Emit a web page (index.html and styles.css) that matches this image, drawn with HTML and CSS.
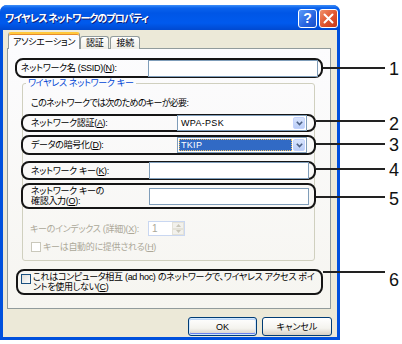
FILE: index.html
```html
<!DOCTYPE html>
<html lang="ja">
<head>
<meta charset="utf-8">
<title>ワイヤレス ネットワークのプロパティ</title>
<link rel="stylesheet" href="styles.css">
</head>
<body>
<div class="page">
  <div class="window">
    <div class="titlebar">
      <span class="title">ワイヤレス ネットワークのプロパティ</span>
      <div class="tbtns">
        <span class="tbtn help">?</span>
        <span class="tbtn close"><svg width="11" height="11" viewBox="0 0 11 11"><path d="M1.5 1.5L9.5 9.5M9.5 1.5L1.5 9.5" stroke="#fff" stroke-width="2" stroke-linecap="round"/></svg></span>
      </div>
    </div>
    <div class="client">
      <div class="tabs">
        <div class="tab active">アソシエーション</div>
        <div class="tab">認証</div>
        <div class="tab">接続</div>
      </div>
      <div class="panel">
        <div class="callout row1">
          <span class="lbl">ネットワーク名 (SSID)(<u>N</u>):</span>
          <span class="edit wide"></span>
        </div>
        <fieldset class="group">
          <legend>ワイヤレス ネットワーク キー</legend>
          <p class="note">このネットワークでは次のためのキーが必要:</p>
          <div class="callout row r2">
            <span class="lbl">ネットワーク認証(<u>A</u>):</span>
            <span class="combo"><span class="ctext">WPA-PSK</span><span class="cbtn"><svg width="7" height="5" viewBox="0 0 7 5"><path d="M0.8 0.8L3.5 3.5L6.2 0.8" fill="none" stroke="#4D6185" stroke-width="1.6"/></svg></span></span>
          </div>
          <div class="callout row r3">
            <span class="lbl">データの暗号化(<u>D</u>):</span>
            <span class="combo"><span class="ctext sel">TKIP</span><span class="cbtn"><svg width="7" height="5" viewBox="0 0 7 5"><path d="M0.8 0.8L3.5 3.5L6.2 0.8" fill="none" stroke="#4D6185" stroke-width="1.6"/></svg></span></span>
          </div>
          <div class="callout row r4">
            <span class="lbl">ネットワーク キー(<u>K</u>):</span>
            <span class="edit"></span>
          </div>
          <div class="callout row r5">
            <span class="lbl two">ネットワーク キーの<br>確認入力(<u>O</u>):</span>
            <span class="edit"></span>
          </div>
          <div class="idxrow">
            <span class="lbl dis">キーのインデックス (詳細)(<u>X</u>):</span>
            <span class="spin"><span class="stext">1</span><span class="sbtns"><span class="sb"><svg width="5" height="3" viewBox="0 0 5 3"><path d="M0 3L2.5 0L5 3Z" fill="#C9C7BA"/></svg></span><span class="sb"><svg width="5" height="3" viewBox="0 0 5 3"><path d="M0 0L2.5 3L5 0Z" fill="#C9C7BA"/></svg></span></span></span>
          </div>
          <div class="chkrow">
            <span class="chk dis"></span>
            <span class="lbl dis">キーは自動的に提供される(<u>H</u>)</span>
          </div>
        </fieldset>
        <div class="callout row6">
          <span class="chk"></span>
          <span class="lbl two">これはコンピュータ相互 (ad hoc) のネットワークで、ワイヤレス アクセス ポイ<br>ントを使用しない(<u>C</u>)</span>
        </div>
      </div>
      <div class="buttons">
        <span class="btn default">OK</span>
        <span class="btn">キャンセル</span>
      </div>
    </div>
  </div>
  <div class="notes">
    <div class="lead l1"></div><span class="num n1">1</span>
    <div class="lead l2"></div><span class="num n2">2</span>
    <div class="lead l3"></div><span class="num n3">3</span>
    <div class="lead l4"></div><span class="num n4">4</span>
    <div class="lead l5"></div><span class="num n5">5</span>
    <div class="lead l6"></div><span class="num n6">6</span>
  </div>
</div>
</body>
</html>
```
FILE: styles.css
```css
html, body {
  margin: 0;
  padding: 0;
  background: #fff;
}
body {
  font-family: "Liberation Sans", "Noto Sans CJK JP", sans-serif;
  font-size: 9px;
  color: #000;
}
.page {
  position: relative;
  width: 402px;
  height: 344px;
  overflow: hidden;
}
.window {
  margin-top: 5px;
  width: 340px;
  height: 335px;
  box-sizing: border-box;
  padding: 0 3px 3px 3px;
  background: #0050DD;
  border-radius: 7px 7px 0 0;
}
.titlebar {
  height: 25px;
  margin: 0 -3px;
  padding: 0 2px 0 5px;
  border-radius: 7px 7px 0 0;
  background: linear-gradient(#3D8EF8 0, #0A62EC 3px, #0056E6 8px, #005AEE 18px, #0049D0 25px);
  display: flex;
  align-items: center;
}
.title {
  color: #fff;
  font-family: "Noto Sans CJK JP", sans-serif;
  font-weight: bold;
  font-size: 10px;
  font-feature-settings: "palt";
  letter-spacing: -0.9px;
  text-shadow: 1px 1px 0 #0A1E7A;
  flex: 1;
}
.tbtns {
  display: flex;
  gap: 2px;
  margin-top: 1px;
}
.tbtn {
  width: 17px;
  height: 17px;
  border: 1px solid #fff;
  border-radius: 3px;
  display: flex;
  align-items: center;
  justify-content: center;
  color: #fff;
  font-family: "Liberation Sans", sans-serif;
  font-weight: bold;
  font-size: 14px;
}
.help {
  background: linear-gradient(135deg, #5A9BFA, #2663E0 60%, #1A50C8);
}
.close {
  background: linear-gradient(135deg, #F0916C, #E0532D 55%, #C8381A);
}
.client {
  background: #ECE9D8;
  height: 307px;
  display: flex;
  flex-direction: column;
}
.tabs {
  display: flex;
  align-items: flex-end;
  padding: 3px 0 0 5px;
  height: 15px;
}
.tab {
  height: 12px;
  line-height: 12px;
  padding: 0 5px;
  border: 1px solid #919B9C;
  border-bottom: none;
  border-radius: 3px 3px 0 0;
  background: linear-gradient(#FFFFFF, #EEEDE5);
  font-feature-settings: "palt";
  letter-spacing: -0.3px;
  margin-right: 1px;
  position: relative;
  top: 1px;
}
.tab.active {
  height: 15px;
  line-height: 17px;
  border-top: 2px solid #FFC83C;
  box-shadow: inset 0 1px 0 #E68B2C;
  background: #FCFCFE;
  padding: 0 4px 0 4px;
  margin-right: 0;
  z-index: 1;
}
.panel {
  margin-left: 4px;
  width: 324px;
  height: 261px;
  box-sizing: border-box;
  border: 1px solid #919B9C;
  background: linear-gradient(#FCFCFE, #F6F5F0);
  display: flex;
  flex-direction: column;
  align-items: flex-start;
}
.callout {
  box-sizing: border-box;
  border: 2px solid #151515;
  border-radius: 8px;
  display: flex;
  align-items: center;
}
.lbl {
  font-feature-settings: "palt";
  letter-spacing: -0.3px;
  white-space: nowrap;
  line-height: 12px;
}
.lbl.two {
  line-height: 10px;
}
.lbl.dis {
  color: #ACA899;
}
.row1 {
  margin: 9px 0 0 7px;
  width: 308px;
  height: 20px;
  padding: 0 3px 0 4px;
}
.edit {
  margin-left: auto;
  width: 160px;
  height: 17px;
  box-sizing: border-box;
  border: 1px solid #7F9DB9;
  background: #fff;
}
.edit.wide {
  width: 170px;
}
.group {
  margin: 0 0 0 14px;
  width: 293px;
  box-sizing: border-box;
  border: 1px solid #D0D0BF;
  border-radius: 3px;
  padding: 0 0 7px 0;
  min-width: 0;
}
.group legend {
  color: #0046D5;
  line-height: 11px;
  padding: 0 2px;
  margin-left: 3px;
  font-feature-settings: "palt";
  letter-spacing: -0.3px;
}
.note {
  margin: 8px 0 0 8px;
  line-height: 12px;
  font-feature-settings: "palt";
  letter-spacing: -0.7px;
}
.row {
  margin-left: -2px;
  width: 295px;
  padding: 0 7px 0 8px;
}
.r2 { margin-top: 5px; height: 18px; }
.r3 { margin-top: 3px; height: 20px; }
.r4 { margin-top: 6px; height: 19px; }
.r5 { margin-top: 3px; height: 26px; }
.r4 .edit, .r5 .edit {
  width: 160px;
  margin-right: -2px;
}
.combo {
  margin-left: auto;
  width: 130px;
  height: 16px;
  box-sizing: border-box;
  border: 1px solid #7F9DB9;
  background: #fff;
  display: flex;
  padding: 1px;
}
.ctext {
  flex: 1;
  font-family: "Liberation Sans", sans-serif;
  font-size: 9px;
  letter-spacing: 0.3px;
  line-height: 12px;
  padding-left: 2px;
}
.ctext.sel {
  background: #316AC5;
  color: #fff;
  outline: 1px dotted #F0C060;
  outline-offset: -1px;
  margin-right: 1px;
}
.cbtn {
  width: 12px;
  background: linear-gradient(#D8E4FD, #BACDF7);
  border: 1px solid #C3D3FD;
  box-sizing: border-box;
  border-radius: 2px;
  display: flex;
  align-items: center;
  justify-content: center;
}
.idxrow {
  margin: 12px 0 0 7px;
  display: flex;
  align-items: center;
  height: 15px;
}
.idxrow .lbl {
  width: 118px;
}
.spin {
  width: 37px;
  height: 15px;
  box-sizing: border-box;
  border: 1px solid #C9D7F1;
  background: #fff;
  display: flex;
}
.stext {
  flex: 1;
  color: #ACA899;
  padding-left: 3px;
  line-height: 13px;
  font-family: "Liberation Sans", sans-serif;
  font-size: 10px;
}
.sbtns {
  width: 12px;
  display: flex;
  flex-direction: column;
}
.sb {
  flex: 1;
  background: #F2F1EC;
  border: 1px solid #E4E2D8;
  box-sizing: border-box;
  display: flex;
  align-items: center;
  justify-content: center;
}
.chkrow {
  margin: 5px 0 0 8px;
  display: flex;
  align-items: center;
  height: 12px;
}
.chk {
  width: 10px;
  height: 10px;
  box-sizing: border-box;
  border: 1px solid #1C5180;
  background: linear-gradient(135deg, #DCDCD7, #FFFFFF);
  margin-right: 2px;
  flex: none;
}
.chk.dis {
  border-color: #CAC8BB;
  background: #fff;
}
.row6 {
  margin: 8px 0 0 8px;
  width: 307px;
  height: 26px;
  padding: 0 0 0 3px;
  align-items: center;
}
.row6 .chk {
  align-self: flex-start;
  margin-top: 3px;
}
.buttons {
  display: flex;
  justify-content: flex-end;
  gap: 5px;
  padding: 8px 5px 0 0;
}
.btn {
  width: 70px;
  height: 19px;
  box-sizing: border-box;
  border: 1px solid #003C74;
  border-radius: 3px;
  background: linear-gradient(#FFFFFF, #F4F3EE 60%, #D6D0C5);
  display: flex;
  align-items: center;
  justify-content: center;
  font-feature-settings: "palt";
}
.btn.default {
  width: 69px;
  box-shadow: inset 0 0 0 1px #CEE7FF, inset 0 -1px 0 1px #6982EE, inset 0 1px 0 1px #BCD4F6;
}
.notes .lead {
  position: absolute;
  height: 2px;
  background: #222;
}
.notes .num {
  position: absolute;
  left: 389px;
  font-family: "Liberation Sans", Arial, sans-serif;
  font-size: 18px;
  line-height: 18px;
  color: #111;
}
.l1 { top: 67px; left: 323px; width: 62px; }
.l2 { top: 120px; left: 316px; width: 69px; }
.l3 { top: 143px; left: 316px; width: 69px; }
.l4 { top: 168px; left: 316px; width: 69px; }
.l5 { top: 196px; left: 316px; width: 69px; }
.l6 { top: 271px; left: 323px; width: 62px; }
.n1 { top: 60px; }
.n2 { top: 115px; }
.n3 { top: 136px; }
.n4 { top: 161px; }
.n5 { top: 190px; }
.n6 { top: 271px; }
```
